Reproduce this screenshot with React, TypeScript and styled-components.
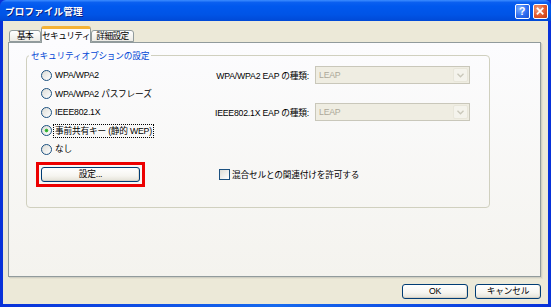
import React from 'react'
import styled, { createGlobalStyle } from 'styled-components'

const GlobalStyle = createGlobalStyle`
  html, body {
    margin: 0;
    padding: 0;
    background: #ffffff;
  }
  body {
    font-family: 'Liberation Sans', 'Noto Sans CJK JP', sans-serif;
    font-size: 8.7px;
    letter-spacing: -0.2px;
    color: #000;
  }
`

type RadioOption = { label: string; checked?: boolean }

const options: RadioOption[] = [
  { label: 'WPA/WPA2' },
  { label: 'WPA/WPA2 パスフレーズ' },
  { label: 'IEEE802.1X' },
  { label: '事前共有キー (静的 WEP)', checked: true },
  { label: 'なし' },
]

const tabs = [
  { label: '基本', width: 32 },
  { label: 'セキュリティ', width: 50 },
  { label: '詳細設定', width: 43 },
]

const DropArrow = () => (
  <SelectArrow>
    <svg width="7" height="5" viewBox="0 0 7 5">
      <path d="M0.5 0.8 L3.5 3.8 L6.5 0.8" stroke="#c9c7ba" strokeWidth="1.3" fill="none" />
    </svg>
  </SelectArrow>
)

const App = () => {
  return (
    <>
      <GlobalStyle />
      <Window>
        <TitleBar>
          <Title>プロファイル管理</Title>
          <TitleButtons>
            <CaptionButton>
              <svg width="15" height="15" viewBox="0 0 15 15">
                <text x="7" y="12" textAnchor="middle" fontSize="12" fontWeight="bold" fill="#fff" fontFamily="Liberation Sans, sans-serif">?</text>
              </svg>
            </CaptionButton>
            <CaptionButton $close>
              <svg width="15" height="15" viewBox="0 0 15 15">
                <path d="M4 4 L10 10 M10 4 L4 10" stroke="#fff" strokeWidth="2" strokeLinecap="square" />
              </svg>
            </CaptionButton>
          </TitleButtons>
        </TitleBar>
        <Frame>
          <Body>
            <TabRow>
              {tabs.map((t, i) => (
                <Tab key={t.label} $active={i === 1} $width={t.width}>
                  {t.label}
                </Tab>
              ))}
            </TabRow>
            <Panel>
              <GroupBox>
                <Legend>セキュリティオプションの設定</Legend>
                <OptionsGrid>
                  {options.map((o, i) => (
                    <RadioRow key={o.label} style={{ gridRow: i + 1 }}>
                      <RadioCircle $checked={o.checked} />
                      <RadioLabel $focused={o.checked}>{o.label}</RadioLabel>
                    </RadioRow>
                  ))}
                  <EapLabel style={{ gridRow: 1 }}>WPA/WPA2 EAP の種類:</EapLabel>
                  <Select style={{ gridRow: 1 }}>
                    <SelectText>LEAP</SelectText>
                    <DropArrow />
                  </Select>
                  <EapLabel style={{ gridRow: 3 }}>IEEE802.1X EAP の種類:</EapLabel>
                  <Select style={{ gridRow: 3 }}>
                    <SelectText>LEAP</SelectText>
                    <DropArrow />
                  </Select>
                  <Highlight>
                    <XpButton $width={99}>設定...</XpButton>
                  </Highlight>
                  <CheckRow>
                    <CheckBox />
                    <span>混合セルとの関連付けを許可する</span>
                  </CheckRow>
                </OptionsGrid>
              </GroupBox>
            </Panel>
            <Footer>
              <XpButton $width={66}>OK</XpButton>
              <XpButton $width={66}>キャンセル</XpButton>
            </Footer>
          </Body>
        </Frame>
      </Window>
    </>
  )
}

export default App

const Window = styled.div`
  width: 551px;
  height: 307px;
  display: flex;
  flex-direction: column;
  overflow: hidden;
  background: #0831d9;
`

const TitleBar = styled.div`
  height: 21px;
  flex: none;
  display: flex;
  align-items: center;
  justify-content: space-between;
  padding: 0 3px 0 5px;
  border-radius: 6px 6px 0 0;
  background: linear-gradient(
    #3c8cff 0%,
    #0a5ff0 12%,
    #0058ee 30%,
    #0054e6 70%,
    #0049d6 100%
  );
`

const Title = styled.span`
  color: #fff;
  font-family: 'Noto Sans CJK JP', sans-serif;
  font-weight: bold;
  font-size: 9.5px;
  letter-spacing: 0.2px;
  text-shadow: 1px 1px 0 #0a1e80;
  padding-top: 1px;
`

const TitleButtons = styled.div`
  display: flex;
  gap: 3px;
  padding-top: 2px;
`

const CaptionButton = styled.div<{ $close?: boolean }>`
  width: 15px;
  height: 15px;
  box-sizing: border-box;
  border: 1px solid #fff;
  border-radius: 2px;
  display: flex;
  align-items: center;
  justify-content: center;
  background: ${({ $close }) =>
    $close
      ? 'radial-gradient(circle at 30% 30%, #f0a080 0%, #e2582c 55%, #c2380e 100%)'
      : 'radial-gradient(circle at 30% 30%, #7fb0ff 0%, #2e6ef0 55%, #1a4fd0 100%)'};
  svg {
    display: block;
  }
`

const Frame = styled.div`
  flex: 1;
  display: flex;
  padding: 0 3px 3px 3px;
  background: linear-gradient(90deg, #0831d9 0%, #166aee 50%, #0831d9 100%);
`

const Body = styled.div`
  flex: 1;
  display: flex;
  flex-direction: column;
  background: #ece9d8;
  padding: 5px 7px 0 5px;
`

const TabRow = styled.div`
  display: flex;
  align-items: flex-end;
  height: 16px;
  padding-left: 1px;
  position: relative;
  z-index: 1;
`

const Tab = styled.div<{ $active?: boolean; $width: number }>`
  box-sizing: border-box;
  width: ${({ $width }) => $width}px;
  height: ${({ $active }) => ($active ? '17px' : '12px')};
  margin-bottom: ${({ $active }) => ($active ? '-1px' : '0')};
  display: flex;
  align-items: center;
  justify-content: center;
  white-space: nowrap;
  border: 1px solid #919b9c;
  border-bottom: ${({ $active }) => ($active ? '0' : '1px solid #919b9c')};
  border-top: ${({ $active }) => ($active ? '3px solid #f5b335' : '1px solid #919b9c')};
  border-radius: 3px 3px 0 0;
  background: ${({ $active }) => ($active ? '#fcfcfe' : 'linear-gradient(#ffffff, #ecebe5)')};
  font-family: 'Noto Sans CJK JP', sans-serif;
  font-size: 8.7px;
  letter-spacing: -0.6px;
  line-height: 1;
`

const Panel = styled.div`
  height: 235px;
  box-sizing: border-box;
  border: 1px solid #919b9c;
  background: linear-gradient(#fcfcfe, #f4f3ee);
  box-shadow: 1px 1px 0 #d0cfc3, 2px 2px 0 #e3e0cf;
  padding: 7px 0 0 17px;
`

const GroupBox = styled.fieldset`
  width: 464px;
  box-sizing: border-box;
  margin: 0;
  padding: 5px 0 20px 14px;
  border: 1px solid #d0d0bf;
  border-radius: 4px;
  min-width: 0;
`

const Legend = styled.legend`
  padding: 0 2px;
  margin-left: -12px;
  color: #0046d5;
  font-family: 'Noto Sans CJK JP', sans-serif;
  font-size: 8.7px;
  line-height: 11px;
`

const OptionsGrid = styled.div`
  display: grid;
  grid-template-columns: 159px 115px 155px;
  grid-template-rows: repeat(5, 18.5px) auto;
  align-items: center;
`

const RadioRow = styled.div`
  grid-column: 1;
  display: flex;
  align-items: center;
  gap: 2px;
  white-space: nowrap;
`

const RadioCircle = styled.span<{ $checked?: boolean }>`
  width: 11px;
  height: 11px;
  box-sizing: border-box;
  border-radius: 50%;
  border: 1px solid #1c5180;
  background: ${({ $checked }) =>
    $checked
      ? 'radial-gradient(circle, #21a121 0, #4fc34f 1.6px, transparent 2.2px), linear-gradient(135deg, #dcdcd6, #ffffff)'
      : 'linear-gradient(135deg, #dcdcd6, #ffffff)'};
  flex: none;
`

const RadioLabel = styled.span<{ $focused?: boolean }>`
  padding: 0 1px;
  line-height: 12px;
  outline: ${({ $focused }) => ($focused ? '1px dotted #000' : 'none')};
`

const EapLabel = styled.div`
  grid-column: 2;
  text-align: right;
  padding-right: 6px;
  white-space: nowrap;
`

const Select = styled.div`
  grid-column: 3;
  height: 18px;
  box-sizing: border-box;
  border: 1px solid #c9c7ba;
  background: #efede2;
  display: flex;
  align-items: center;
  justify-content: space-between;
  padding: 0 1px 0 3px;
`

const SelectText = styled.span`
  color: #aca899;
`

const SelectArrow = styled.span`
  width: 15px;
  height: 14px;
  box-sizing: border-box;
  border: 1px solid #e8e6da;
  border-radius: 2px;
  background: #f4f3ec;
  display: flex;
  align-items: center;
  justify-content: center;
`

const Highlight = styled.div`
  grid-row: 6;
  grid-column: 1;
  justify-self: start;
  margin: 3px 0 0 -5px;
  padding: 2px;
  border: 3px solid #ec0000;
  display: flex;
`

const XpButton = styled.div<{ $width: number }>`
  width: ${({ $width }) => $width}px;
  height: 15px;
  box-sizing: border-box;
  border: 1px solid #003c74;
  border-radius: 3px;
  background: linear-gradient(#ffffff 0%, #f6f5f0 60%, #e3e1d6 100%);
  box-shadow: inset 0 -1px 0 #d6d0c5, inset -1px 0 0 #e3ded3;
  display: flex;
  align-items: center;
  justify-content: center;
  line-height: 1;
`

const CheckRow = styled.div`
  grid-row: 6;
  grid-column: 2 / 4;
  display: flex;
  align-items: center;
  gap: 2px;
  padding: 3px 0 0 19px;
  white-space: nowrap;
`

const CheckBox = styled.span`
  width: 11px;
  height: 11px;
  box-sizing: border-box;
  border: 1px solid #1c5180;
  background: linear-gradient(135deg, #dcdcd6, #ffffff);
  flex: none;
`

const Footer = styled.div`
  display: flex;
  justify-content: flex-end;
  gap: 7px;
  padding: 7px 0 0 0;
`
